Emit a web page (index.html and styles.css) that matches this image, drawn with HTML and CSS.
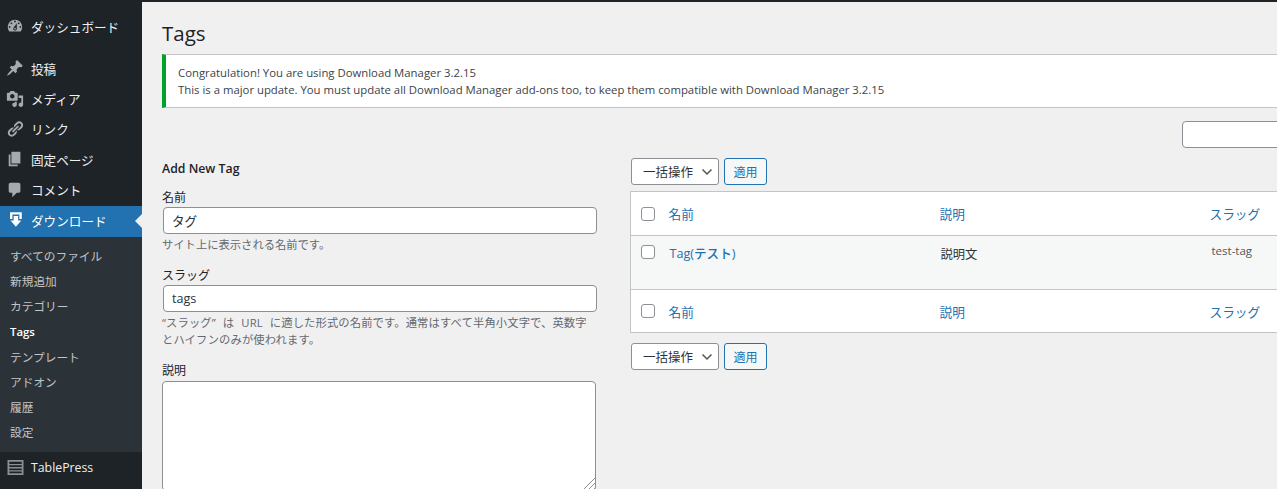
FILE: index.html
```html
<!DOCTYPE html>
<html lang="ja">
<head>
<meta charset="utf-8">
<title>Tags</title>
<link rel="stylesheet" href="styles.css">
</head>
<body>
<div class="page">
  <nav class="sidebar">
    <ul class="menu menu-first">
      <li class="item"><svg class="ico" viewBox="0 0 20 20"><path d="M3.76 16h12.48c1.1-1.37 1.76-3.11 1.76-5 0-4.42-3.58-8-8-8s-8 3.58-8 8c0 1.89.66 3.63 1.76 5zM10 4c.55 0 1 .45 1 1s-.45 1-1 1-1-.45-1-1 .45-1 1-1zM6 6c.55 0 1 .45 1 1s-.45 1-1 1-1-.45-1-1 .45-1 1-1zm8 0c.55 0 1 .45 1 1s-.45 1-1 1-1-.45-1-1 .45-1 1-1zm-5.37 5.55L12 7v6c0 1.1-.9 2-2 2s-2-.9-2-2c0-.57.24-1.08.63-1.45zM4 10c.55 0 1 .45 1 1s-.45 1-1 1-1-.45-1-1 .45-1 1-1zm12 0c.55 0 1 .45 1 1s-.45 1-1 1-1-.45-1-1 .45-1 1-1zm-5 3c0-.55-.45-1-1-1s-1 .45-1 1 .45 1 1 1 1-.45 1-1z"/></svg><span>ダッシュボード</span></li>
    </ul>
    <ul class="menu">
      <li class="item"><svg class="ico" viewBox="0 0 20 20"><path d="M10.44 3.02l1.82-1.82 6.36 6.35-1.83 1.82c-1.05-.68-2.48-.57-3.41.36l-.75.75c-.92.93-1.04 2.35-.35 3.41l-1.83 1.82-2.41-2.41-2.8 2.79c-.42.42-3.38 2.71-3.8 2.29s1.86-3.39 2.28-3.81l2.79-2.79L4.1 9.36l1.83-1.82c1.05.69 2.48.57 3.4-.36l.75-.75c.93-.92 1.05-2.35.36-3.41z"/></svg><span>投稿</span></li>
      <li class="item"><svg class="ico" viewBox="0 0 20 20"><path d="M13 11V4c0-.55-.45-1-1-1h-1.67L9 1H5L3.67 3H2c-.55 0-1 .45-1 1v7c0 .55.45 1 1 1h10c.55 0 1-.45 1-1zM7 4.5c1.38 0 2.5 1.12 2.5 2.5S8.38 9.5 7 9.5 4.5 8.38 4.5 7 5.62 4.5 7 4.5zM14 6h5v10.5c0 1.38-1.12 2.5-2.5 2.5S14 17.88 14 16.5s1.12-2.5 2.5-2.5c.17 0 .34.02.5.05V9h-3V6zm-4 8.05V13h2v3.5c0 1.38-1.12 2.5-2.5 2.5S7 17.88 7 16.5 8.12 14 9.5 14c.17 0 .34.02.5.05z"/></svg><span>メディア</span></li>
      <li class="item"><svg class="ico" viewBox="0 0 20 20"><path d="M17.74 2.76c1.68 1.69 1.68 4.41 0 6.1l-1.53 1.52c-1.12 1.12-2.7 1.47-4.14 1.09l2.62-2.61.76-.77.76-.76c.84-.84.84-2.2 0-3.04-.84-.85-2.2-.85-3.04 0l-.77.76-3.38 3.38c-.37-1.44-.02-3.02 1.1-4.14l1.52-1.53c1.69-1.68 4.42-1.68 6.1 0zM8.59 13.43l5.34-5.34c.42-.42.42-1.1 0-1.52-.44-.43-1.13-.39-1.53 0l-5.33 5.34c-.42.42-.42 1.1 0 1.52.44.43 1.13.39 1.52 0zm-.76 2.29l4.14-4.15c.38 1.44.03 3.02-1.09 4.14l-1.52 1.53c-1.69 1.68-4.41 1.68-6.1 0-1.68-1.68-1.68-4.42 0-6.1l1.53-1.52c1.12-1.12 2.7-1.47 4.14-1.1l-4.14 4.15c-.85.84-.85 2.2 0 3.05.84.84 2.2.84 3.04 0z"/></svg><span>リンク</span></li>
      <li class="item"><svg class="ico" viewBox="0 0 20 20"><path d="M6 15V2h10v13H6zm-1 1h8v2H3V5h2v11z"/></svg><span>固定ページ</span></li>
      <li class="item"><svg class="ico" viewBox="0 0 20 20"><path d="M5 2h9c1.1 0 2 .9 2 2v7c0 1.1-.9 2-2 2h-2l-5 5v-5H5c-1.1 0-2-.9-2-2V4c0-1.1.9-2 2-2z"/></svg><span>コメント</span></li>
      <li class="item item-active"><svg class="ico ico-white" viewBox="0 0 20 20"><path d="M4.500 1.500h13V9h-2.600V4H7.100v5H4.500zM8.500 5.500h5v5H17l-6 7-6-7h3.500z"/></svg><span>ダウンロード</span></li>
    </ul>
    <ul class="submenu">
      <li>すべてのファイル</li>
      <li>新規追加</li>
      <li>カテゴリー</li>
      <li class="sub-current">Tags</li>
      <li>テンプレート</li>
      <li>アドオン</li>
      <li>履歴</li>
      <li>設定</li>
    </ul>
    <ul class="menu">
      <li class="item item-plugin"><svg class="ico ico-table" viewBox="0 0 18 18"><path fill-rule="evenodd" d="M0 0h18v17H0zM2 2v2.500h14V2zm0 4v2h14V6zm0 3.500v2h14v-2zm0 3.500v2h14v-2z"/></svg><span>TablePress</span></li>
    </ul>
  </nav>

  <main class="main">
    <div class="wrap">
      <h1 class="title">Tags</h1>
      <div class="notice">
        <p>Congratulation! You are using Download Manager 3.2.15</p>
        <p>This is a major update. You must update all Download Manager add-ons too, to keep them compatible with Download Manager 3.2.15</p>
      </div>
      <div class="search-row"><input class="input search" type="search"></div>
      <div class="columns">
        <form class="col-left">
          <h2 class="form-title">Add New Tag</h2>
          <div class="field">
            <label class="label">名前</label>
            <input class="input field-input" type="text" value="タグ">
            <p class="help">サイト上に表示される名前です。</p>
          </div>
          <div class="field">
            <label class="label">スラッグ</label>
            <input class="input field-input" type="text" value="tags">
            <p class="help help-slug">“スラッグ” は URL に適した形式の名前です。通常はすべて半角小文字で、英数字<br>とハイフンのみが使われます。</p>
          </div>
          <div class="field">
            <label class="label">説明</label>
            <div class="area-wrap"><textarea class="input area"></textarea></div>
          </div>
        </form>
        <div class="col-right">
          <div class="tablenav">
            <select class="bulk"><option>一括操作</option></select>
            <button class="apply" type="button">適用</button>
          </div>
          <table class="list">
            <colgroup><col class="c-check"><col class="c-name"><col class="c-desc"><col></colgroup>
            <thead>
              <tr><th class="cell-check"><span class="check"></span></th><th><a class="link">名前</a></th><th><a class="link">説明</a></th><th><a class="link">スラッグ</a></th></tr>
            </thead>
            <tbody>
              <tr class="row">
                <td class="cell-check"><span class="check"></span></td>
                <td class="name"><a class="link link-strong">Tag(テスト)</a></td>
                <td class="desc">説明文</td>
                <td class="slug">test-tag</td>
              </tr>
            </tbody>
            <tfoot>
              <tr><th class="cell-check"><span class="check"></span></th><th><a class="link">名前</a></th><th><a class="link">説明</a></th><th><a class="link">スラッグ</a></th></tr>
            </tfoot>
          </table>
          <div class="tablenav tablenav-bottom">
            <select class="bulk"><option>一括操作</option></select>
            <button class="apply" type="button">適用</button>
          </div>
        </div>
      </div>
    </div>
  </main>
</div>
</body>
</html>
```
FILE: styles.css
```css
* { box-sizing: border-box; }
html, body { margin: 0; height: 100%; overflow: hidden; }
body {
  font-family: "Open Sans", "Noto Sans CJK JP", sans-serif;
  font-size: 11.6px;
  color: #2c3338;
  background: #f0f0f1;
}
ul { list-style: none; margin: 0; padding: 0; }
p { margin: 0; }

.page { display: flex; height: 489px; overflow: hidden; }

.sidebar { width: 142px; flex: none; background: #1d2327; }
.menu-first { padding-top: 12px; margin-bottom: 11.6px; }
.item {
  position: relative;
  display: flex;
  align-items: center;
  height: 30.4px;
  padding: 0 0 2px 6px;
  gap: 7px;
  font-size: 12.6px;
  color: #f0f0f1;
}
.ico { width: 18px; height: 18px; flex: none; fill: #a7aaad; }
.ico-white { fill: #fff; }
.item-active { background: #2271b1; color: #fff; height: 31px; }
.item-active::after {
  content: "";
  position: absolute;
  right: 0;
  top: 8px;
  border: 7.5px solid transparent;
  border-right-color: #f0f0f1;
  border-left-width: 0;
}
.item-plugin { height: 31px; padding: 1px 0 0 7px; font-size: 12.3px; }
.ico-table { width: 17px; height: 16px; fill: #8c8f94; }
.submenu {
  background: #2c3338;
  padding: 6.9px 0 6.5px;
  font-size: 11.7px;
  color: #c3c4c7;
}
.submenu li { height: 25.2px; line-height: 25px; padding-left: 10px; }
.submenu .sub-current { color: #fff; font-weight: 600; font-size: 11.4px; }

.main { flex: 1; min-width: 0; overflow: hidden; border-top: 2px solid #1d2327; padding-left: 20px; }
.wrap { width: 1170px; }
.title { margin: 0; padding-top: 18px; font-size: 20.5px; font-weight: 400; line-height: 26px; color: #1d2327; height: 44px; }
.notice {
  margin-top: 8px;
  height: 54px;
  padding: 10px 12px 0;
  background: #fff;
  border: 1px solid #c3c4c7;
  border-left: 4px solid #00a32a;
  line-height: 16.5px;
  color: #3c434a;
  font-size: 11.35px;
  white-space: nowrap;
}

.input {
  display: block;
  background: #fff;
  border: 1px solid #8c8f94;
  border-radius: 4px;
  font: inherit;
  color: #2c3338;
  outline: 0;
}
.search-row { display: flex; justify-content: flex-end; margin-top: 13px; }
.search { width: 150px; height: 27px; appearance: none; }

.columns { display: flex; margin-top: 10px; gap: 33px; }
.col-left { width: 435px; flex: none; }
.col-right { flex: 1; min-width: 0; }

.form-title { margin: 0; padding-top: 2px; font-size: 12.3px; font-weight: 600; line-height: 17px; color: #1d2327; }
.field { margin-top: 12px; }
.field + .field { margin-top: 14px; }
.label { display: block; font-size: 12px; line-height: 17px; height: 18px; color: #1d2327; }
.field-input { width: 434px; height: 27px; margin-left: 1px; padding: 0 8px; font-size: 12.6px; }
.help { margin-top: 2px; font-size: 11.3px; line-height: 17px; color: #646970; }
.help-slug { word-spacing: 4px; letter-spacing: .12px; }
.area-wrap { position: relative; width: 434px; margin-top: 1px; }
.area-wrap::after {
  content: "";
  position: absolute;
  right: 1px;
  bottom: 1px;
  width: 13px;
  height: 13px;
  background: repeating-linear-gradient(135deg, transparent 0 2.5px, #8c8f94 2.5px 3.5px);
  clip-path: polygon(100% 0, 100% 100%, 0 100%);
  pointer-events: none;
}
.area { width: 434px; height: 110px; padding: 4px 8px; resize: none; }

.tablenav { display: flex; gap: 5px; align-items: flex-start; padding-left: 1px; }
.tablenav-bottom { margin-top: 10px; }
.bulk {
  width: 88px;
  height: 27px;
  padding: 1px 20px 0 11px;
  appearance: none;
  background: #fff url("data:image/svg+xml,%3Csvg xmlns='http://www.w3.org/2000/svg' width='12' height='12' viewBox='0 0 12 12'%3E%3Cpath d='M1.500 3.500L6 8l4.500-4.500' fill='none' stroke='%23555' stroke-width='1.500'/%3E%3C/svg%3E") no-repeat right 5px center;
  border: 1px solid #8c8f94;
  border-radius: 3px;
  font: inherit;
  font-size: 12.5px;
  color: #2c3338;
}
.apply {
  width: 43px;
  height: 27px;
  padding: 0;
  background: #f6f7f7;
  border: 1px solid #2271b1;
  border-radius: 3px;
  font: inherit;
  font-size: 12px;
  color: #2271b1;
}

.list {
  width: 702px;
  margin-top: 6px;
  table-layout: fixed;
  border-collapse: collapse;
  background: #fff;
  border: 1px solid #c3c4c7;
}
.c-check { width: 30px; }
.c-name { width: 271px; }
.c-desc { width: 270px; }
.list th { padding: 0 8px; text-align: left; font-weight: 400; font-size: 12.7px; }
.list thead th { height: 44px; border-bottom: 1px solid #c3c4c7; }
.list tfoot th { height: 43px; border-top: 1px solid #c3c4c7; }
.list .cell-check { padding: 0 0 0 10px; }
.list td { height: 54px; padding: 7px 8px 0 9px; vertical-align: top; background: #f6f7f7; font-size: 11.6px; }
.list td.cell-check { padding: 9px 0 0 10px; }
.check {
  display: block;
  width: 14px;
  height: 14px;
  background: #fff;
  border: 1px solid #8c8f94;
  border-radius: 3px;
}
.link { color: #2271b1; }
.link-strong { font-weight: 500; font-size: 12.6px; }
.list td.desc { padding-top: 9px; font-size: 12.3px; color: #2c3338; }
.list td.slug { font-size: 11.5px; padding-left: 10px; color: #50575e; }
```
